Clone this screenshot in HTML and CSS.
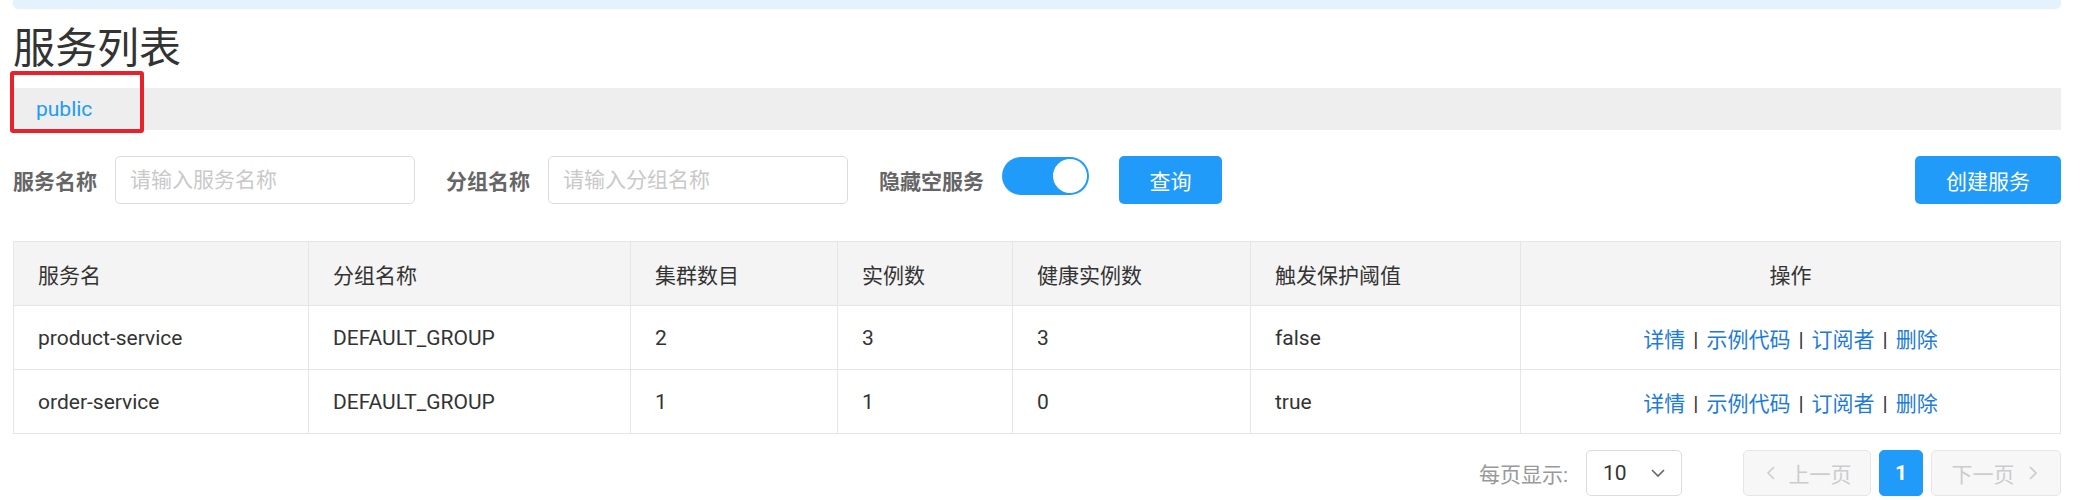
FILE: index.html
```html
<!DOCTYPE html>
<html lang="zh-CN">
<head>
    <meta charset="UTF-8">
    <meta name="viewport" content="width=device-width, initial-scale=1.0">
    <title>服务列表</title>
    <link rel="stylesheet" href="styles.css">
</head>
<body>
    <div class="page">
        <div class="notice"></div>

        <h1 class="title">服务列表</h1>

        <div class="ns-bar">
            <a class="ns-link" href="#">public</a>
            <div class="mark-box"></div>
        </div>

        <div class="filters">
            <span class="filter-label">服务名称</span>
            <input class="filter-input" type="text" placeholder="请输入服务名称">
            <span class="filter-label">分组名称</span>
            <input class="filter-input" type="text" placeholder="请输入分组名称">
            <span class="filter-label">隐藏空服务</span>
            <div class="switch on"><span class="switch-knob"></span></div>
            <button class="btn btn-primary btn-query">查询</button>
            <div class="spacer"></div>
            <button class="btn btn-primary btn-create">创建服务</button>
        </div>

        <table class="services">
            <colgroup>
                <col class="col-name">
                <col class="col-group">
                <col class="col-cluster">
                <col class="col-ins">
                <col class="col-healthy">
                <col class="col-protect">
                <col class="col-ops">
            </colgroup>
            <thead>
                <tr>
                    <th>服务名</th>
                    <th>分组名称</th>
                    <th>集群数目</th>
                    <th>实例数</th>
                    <th>健康实例数</th>
                    <th>触发保护阈值</th>
                    <th class="ops">操作</th>
                </tr>
            </thead>
            <tbody>
                <tr>
                    <td>product-service</td>
                    <td>DEFAULT_GROUP</td>
                    <td>2</td>
                    <td>3</td>
                    <td>3</td>
                    <td>false</td>
                    <td class="ops">
                        <a href="#">详情</a><span class="sep">|</span><a href="#">示例代码</a><span class="sep">|</span><a href="#">订阅者</a><span class="sep">|</span><a href="#">删除</a>
                    </td>
                </tr>
                <tr>
                    <td>order-service</td>
                    <td>DEFAULT_GROUP</td>
                    <td>1</td>
                    <td>1</td>
                    <td>0</td>
                    <td>true</td>
                    <td class="ops">
                        <a href="#">详情</a><span class="sep">|</span><a href="#">示例代码</a><span class="sep">|</span><a href="#">订阅者</a><span class="sep">|</span><a href="#">删除</a>
                    </td>
                </tr>
            </tbody>
        </table>

        <div class="pager">
            <span class="pager-label">每页显示:</span>
            <div class="page-size">
                <span>10</span>
                <svg class="chev" width="18" height="18" viewBox="0 0 18 18"><polyline points="3,6 9,12 15,6" fill="none" stroke="#666" stroke-width="1.6"/></svg>
            </div>
            <button class="page-btn page-nav prev" disabled>
                <svg width="16" height="16" viewBox="0 0 16 16"><polyline points="11,2 5,8 11,14" fill="none" stroke="#ccc" stroke-width="1.6"/></svg>
                上一页
            </button>
            <button class="page-btn current">1</button>
            <button class="page-btn page-nav next" disabled>
                下一页
                <svg width="16" height="16" viewBox="0 0 16 16"><polyline points="5,2 11,8 5,14" fill="none" stroke="#ccc" stroke-width="1.6"/></svg>
            </button>
        </div>
    </div>
</body>
</html>
```

FILE: styles.css
```css
body {
    margin: 0;
    font-family: Roboto, "Noto Sans CJK SC", sans-serif;
    font-size: 21px;
    color: #333;
    background-color: #fff;
}
.page {
    width: 2048px;
    padding: 0 0 0 13px;
}
.notice {
    height: 9px;
    background-color: #e3f2fd;
    border-radius: 0 0 5px 5px;
}
.title {
    font-size: 42px;
    font-weight: normal;
    line-height: 50px;
    margin: 15px 0 14px 0;
    color: #333;
}
.ns-bar {
    position: relative;
    height: 42px;
    display: flex;
    align-items: center;
    padding-left: 23px;
    background-color: #eee;
}
.ns-link {
    color: #209bfa;
    text-decoration: none;
    font-size: 21px;
}
/* red highlight drawn over the namespace tab */
.mark-box {
    position: absolute;
    left: -3px;
    top: -17px;
    width: 126px;
    height: 54px;
    border: 4px solid #e8222b;
    border-radius: 3px;
}
.filters {
    display: flex;
    align-items: center;
    height: 48px;
    margin-top: 26px;
}
.filter-label {
    font-weight: bold;
    color: #666;
    margin-right: 18px;
}
.filter-input {
    box-sizing: border-box;
    width: 300px;
    height: 48px;
    border: 1px solid #dcdcdc;
    border-radius: 5px;
    padding: 0 14px;
    font-family: inherit;
    font-size: 21px;
    color: #333;
    margin-right: 31px;
}
.filter-input::placeholder {
    color: #c9c9c9;
}
.switch {
    position: relative;
    box-sizing: border-box;
    width: 87px;
    height: 38px;
    border-radius: 19px;
    background-color: #209bfa;
    margin: 1px 30px 0 0;
    align-self: flex-start;
}
.switch-knob {
    position: absolute;
    top: 2px;
    right: 2px;
    width: 34px;
    height: 34px;
    border-radius: 50%;
    background-color: #fff;
}
.btn {
    box-sizing: border-box;
    height: 48px;
    border: none;
    border-radius: 5px;
    font-family: inherit;
    font-size: 21px;
    cursor: pointer;
}
.btn-primary {
    background-color: #209bfa;
    color: #fff;
}
.btn-query {
    width: 103px;
}
.btn-create {
    width: 146px;
}
.spacer {
    flex: 1;
}
.services {
    width: 100%;
    margin-top: 37px;
    border-collapse: collapse;
    border: 1px solid #e6e6e6;
    table-layout: fixed;
}
.col-name { width: 295px; }
.col-group { width: 322px; }
.col-cluster { width: 207px; }
.col-ins { width: 175px; }
.col-healthy { width: 238px; }
.col-protect { width: 270px; }
.services th,
.services td {
    height: 63px;
    padding: 0 24px;
    text-align: left;
    border: 1px solid #e6e6e6;
    font-weight: normal;
    color: #333;
}
.services th {
    background-color: #f4f4f4;
}
.services .ops {
    text-align: center;
}
.services .ops a {
    color: #1d7bd8;
    text-decoration: none;
}
.services .sep {
    padding: 0 8px;
}
.pager {
    display: flex;
    justify-content: flex-end;
    align-items: center;
    margin-top: 16px;
}
.pager-label {
    color: #999;
    margin-right: 18px;
}
.page-size {
    box-sizing: border-box;
    width: 96px;
    height: 46px;
    border: 1px solid #dcdcdc;
    border-radius: 5px;
    display: flex;
    align-items: center;
    justify-content: space-between;
    padding: 0 14px 0 16px;
    margin-right: 61px;
    color: #333;
}
.page-btn {
    box-sizing: border-box;
    height: 46px;
    border: 1px solid #e6e6e6;
    border-radius: 5px;
    background-color: #fff;
    font-family: inherit;
    font-size: 21px;
    display: flex;
    align-items: center;
    justify-content: center;
    gap: 10px;
}
.page-nav {
    width: 128px;
    color: #ccc;
    background-color: #f7f7f7;
}
.page-btn.current {
    width: 44px;
    margin: 0 8px;
    border-color: #209bfa;
    background-color: #209bfa;
    color: #fff;
    font-weight: bold;
}
.next {
    width: 130px;
}
```
